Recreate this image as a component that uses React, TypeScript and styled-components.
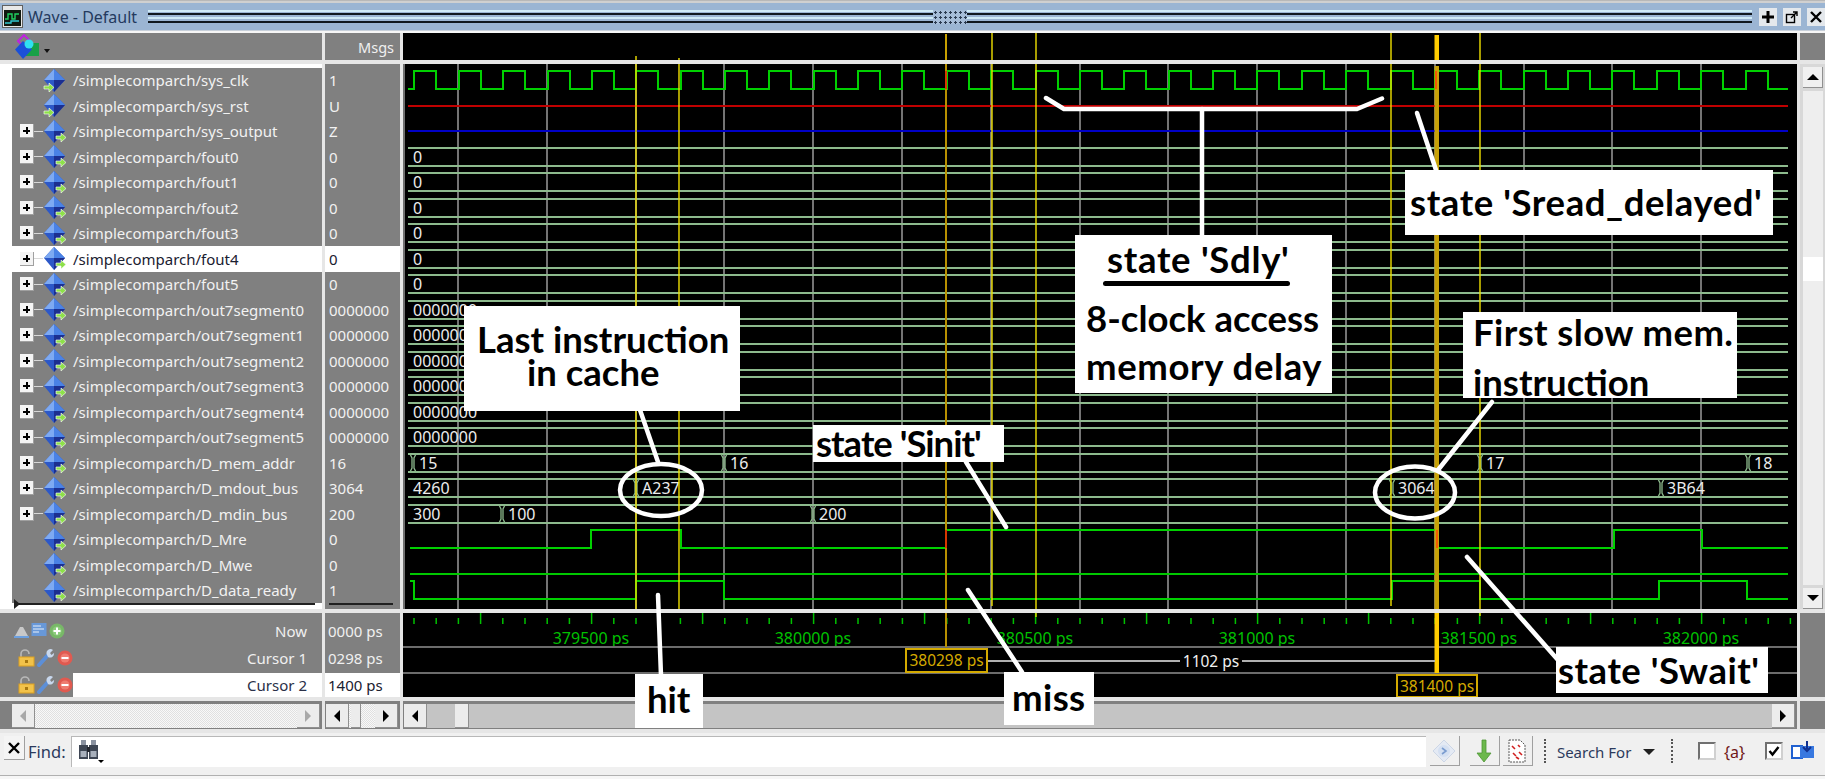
import styled, { createGlobalStyle } from "styled-components";

const GlobalStyle = createGlobalStyle`
  html, body { margin: 0; padding: 0; background: #f0f0f0; }
  body { font-family: "Noto Sans", "Liberation Sans", sans-serif; overflow: hidden; }
`;

const ROW_H = 25.5;
const rowTop = (i: number) => Math.round(71 + ROW_H * i);
const rowLow = (i: number) => rowTop(i) + 18;
const rowMid = (i: number) => rowTop(i) + 9;
const WAVE_L = 408;
const WAVE_R = 1790;
const GRID = Array.from({ length: 15 }, (_, n) => Math.round(458 + 88.8 * n));
const THIN_CURSORS: [number, number, number][] = [
  [636, 56, 609],
  [679, 58, 609],
  [992, 32, 606],
  [1036, 32, 617],
  [1391, 29, 606],
  [1480, 32, 616],
];

type Signal = { name: string; msg: string; input?: boolean; bus?: boolean };

const signals: Signal[] = [
  { name: "sys_clk", msg: "1", input: true },
  { name: "sys_rst", msg: "U", input: true },
  { name: "sys_output", msg: "Z", bus: true },
  { name: "fout0", msg: "0", bus: true },
  { name: "fout1", msg: "0", bus: true },
  { name: "fout2", msg: "0", bus: true },
  { name: "fout3", msg: "0", bus: true },
  { name: "fout4", msg: "0", bus: true },
  { name: "fout5", msg: "0", bus: true },
  { name: "out7segment0", msg: "0000000", bus: true },
  { name: "out7segment1", msg: "0000000", bus: true },
  { name: "out7segment2", msg: "0000000", bus: true },
  { name: "out7segment3", msg: "0000000", bus: true },
  { name: "out7segment4", msg: "0000000", bus: true },
  { name: "out7segment5", msg: "0000000", bus: true },
  { name: "D_mem_addr", msg: "16", bus: true },
  { name: "D_mdout_bus", msg: "3064", bus: true },
  { name: "D_mdin_bus", msg: "200", bus: true },
  { name: "D_Mre", msg: "0" },
  { name: "D_Mwe", msg: "0" },
  { name: "D_data_ready", msg: "1" },
];

// [row, [x, label] ...]: x of 0 means the value has no transition mark
const busValues: [number, [number, string][]][] = [
  [3, [[0, "0"]]],
  [4, [[0, "0"]]],
  [5, [[0, "0"]]],
  [6, [[0, "0"]]],
  [7, [[0, "0"]]],
  [8, [[0, "0"]]],
  [9, [[0, "0000000"]]],
  [10, [[0, "0000000"]]],
  [11, [[0, "0000000"]]],
  [12, [[0, "0000000"]]],
  [13, [[0, "0000000"]]],
  [14, [[0, "0000000"]]],
  [15, [[413, "15"], [724, "16"], [1480, "17"], [1748, "18"]]],
  [16, [[0, "4260"], [636, "A237"], [1392, "3064"], [1661, "3B64"]]],
  [17, [[0, "300"], [502, "100"], [813, "200"]]],
];

const clockPath = () => {
  let d = `M${WAVE_L} ${rowLow(0)}`;
  for (let k = 0; k <= 30; k++) {
    const rise = Math.round(414.4 + 44.37 * k);
    d += ` H${rise} V${rowTop(0)} H${rise + 22} V${rowLow(0)}`;
  }
  return d + ` H${WAVE_R - 2}`;
};

const stepPath = (row: number, startHigh: boolean, edges: number[]) => {
  let high = startHigh;
  let d = `M${WAVE_L + 2} ${high ? rowTop(row) : rowLow(row)}`;
  for (const x of edges) {
    high = !high;
    d += ` H${x} V${high ? rowTop(row) : rowLow(row)}`;
  }
  return d + ` H${WAVE_R - 2}`;
};

const Page = styled.div`
  position: relative;
  width: 1825px;
  height: 779px;
  display: flex;
  flex-direction: column;
  overflow: hidden;
  background: #f6f6f6;
`;

const TopEdge = styled.div`
  height: 3px;
  background: #d0d0d0;
  border-top: 1px solid #b8b8b8;
  box-sizing: border-box;
`;

const TitleBar = styled.div`
  height: 28px;
  background: #9bb5d3;
  display: flex;
  align-items: center;
  padding-left: 2px;
  border-bottom: 1px solid #c8d0da;
  box-sizing: border-box;
`;

const TitleText = styled.span`
  margin-left: 5px;
  width: 120px;
  font-size: 16px;
  color: #243a5e;
  white-space: nowrap;
`;

const Grip = styled.div`
  flex: 1;
  height: 14px;
  margin-top: 1px;
  background: linear-gradient(
    to bottom,
    #cfeaf6 0 2px,
    #9bb5d3 2px 3px,
    #10181f 3px 5px,
    #9bb5d3 5px 7px,
    #cfeaf6 7px 9px,
    #9bb5d3 9px 11px,
    #10181f 11px 13px,
    #9bb5d3 13px 14px
  );
`;

const GripDots = styled.div`
  width: 34px;
  height: 14px;
  margin-top: 1px;
  background-color: #a6bdd8;
  background-image: radial-gradient(circle, #2a3a50 1px, transparent 1.2px);
  background-size: 5px 5px;
`;

const TitleButtons = styled.div`
  display: flex;
  gap: 6px;
  margin-left: 7px;
`;

const TitleButton = styled.button`
  width: 18px;
  height: 18px;
  padding: 0;
  border: none;
  background: #e4e8ec;
  display: flex;
  align-items: center;
  justify-content: center;
`;

const Panes = styled.div`
  margin-top: 2px;
  display: grid;
  grid-template-columns: 322px 75px 1394px 25px;
  grid-template-rows: 27px 545px 84px 28px;
  column-gap: 3px;
  row-gap: 4px;
  background: #e6e6e6;
  padding-bottom: 4px;
`;

const HeadCell = styled.div<{ $align?: string }>`
  background: #808080;
  display: flex;
  align-items: center;
  justify-content: ${(p) => p.$align || "flex-start"};
  padding: 0 6px 0 14px;
  color: #f0f0f0;
  font-size: 14.5px;
`;

const GrayCell = styled.div`
  background: #808080;
`;

const WaveSvg = styled.svg`
  display: block;
  background: #000;
`;

const NamePane = styled.div`
  position: relative;
  background: #fff;
  padding-top: 3.5px;
`;

const MsgPane = styled.div`
  position: relative;
  background: #808080;
  padding-top: 3.5px;
  overflow: hidden;
`;

const SignalRow = styled.div<{ $selected?: boolean }>`
  height: ${ROW_H}px;
  margin-left: 12px;
  display: flex;
  align-items: center;
  background: ${(p) => (p.$selected ? "#fff" : "#808080")};
  color: ${(p) => (p.$selected ? "#1a2030" : "#f2f2f2")};
  font-size: 15px;
  white-space: nowrap;
`;

const MsgRow = styled(SignalRow)`
  margin-left: 0;
  padding-left: 4px;
`;

const TreeSlot = styled.div`
  width: 31px;
  height: 100%;
  display: flex;
  align-items: center;
  justify-content: flex-end;
`;

const Expander = styled.div`
  position: relative;
  width: 14px;
  height: 14px;
  box-sizing: border-box;
  background: #f4f4f4;
  border-right: 1px solid #a0a0a0;
  border-bottom: 1px solid #a0a0a0;
  margin-right: 9px;

  &::before {
    content: "";
    position: absolute;
    left: 3px;
    top: 6px;
    width: 7px;
    height: 2px;
    background: #000;
  }
  &::after {
    content: "";
    position: absolute;
    left: 6px;
    top: 3px;
    width: 2px;
    height: 7px;
    background: #000;
  }
`;

const TreeTick = styled.div`
  position: absolute;
  left: 34px;
  width: 9px;
  height: 1px;
  background: #d8d8d8;
`;

const SignalName = styled.span`
  margin-left: 6px;
`;

const EndMark = styled.div<{ $left: number; $right: number }>`
  position: absolute;
  left: ${(p) => p.$left}px;
  right: ${(p) => p.$right}px;
  bottom: 4px;
  height: 2px;
  background: #202020;
`;

const EndArrow = styled.div`
  position: absolute;
  left: 14px;
  bottom: 0;
  width: 0;
  height: 0;
  border-top: 5px solid transparent;
  border-bottom: 5px solid transparent;
  border-left: 6px solid #202020;
`;

const CursorNames = styled.div`
  background: #808080;
  display: flex;
  flex-direction: column;
  padding-top: 5px;
`;

const CursorRow = styled.div<{ $selected?: boolean; $h: number }>`
  height: ${(p) => p.$h}px;
  display: flex;
  align-items: center;
  color: ${(p) => (p.$selected ? "#2a3048" : "#f0f0f0")};
  font-size: 15px;
  padding-right: 15px;
`;

const CursorIcons = styled.div<{ $left: number }>`
  display: flex;
  align-items: center;
  gap: 2px;
  width: ${(p) => 73 - p.$left}px;
  margin-left: ${(p) => p.$left}px;
  flex: none;
`;

const CursorLabel = styled.div<{ $selected?: boolean }>`
  flex: 1;
  align-self: stretch;
  display: flex;
  align-items: center;
  justify-content: flex-end;
  margin-right: -15px;
  padding-right: 15px;
  background: ${(p) => (p.$selected ? "#fff" : "transparent")};
`;

const CursorValues = styled.div`
  background: #808080;
  padding-top: 5px;
  display: flex;
  flex-direction: column;
`;

const CursorValue = styled.div<{ $selected?: boolean; $h: number }>`
  height: ${(p) => p.$h}px;
  display: flex;
  align-items: center;
  padding-left: 3px;
  font-size: 15px;
  white-space: nowrap;
  background: ${(p) => (p.$selected ? "#fff" : "transparent")};
  color: ${(p) => (p.$selected ? "#1a2030" : "#f0f0f0")};
`;

const ScrollCell = styled.div<{ $pad?: number }>`
  background: #808080;
  display: flex;
  align-items: stretch;
  padding: 3px 2px 1px ${(p) => p.$pad ?? 1}px;
`;

const ScrollButton = styled.button<{ $disabled?: boolean }>`
  width: 23px;
  padding: 0;
  flex: none;
  border: none;
  border-right: 1px solid #909090;
  border-bottom: 1px solid #909090;
  background: #ececec;
  display: flex;
  align-items: center;
  justify-content: center;
  color: ${(p) => (p.$disabled ? "#a8a8a8" : "#000")};
`;

const Track = styled.div<{ $hatched?: boolean }>`
  flex: 1;
  background: ${(p) => (p.$hatched ? "#f0f0f0" : "#c4c4c4")};
  background-image: ${(p) =>
    p.$hatched
      ? "repeating-conic-gradient(#e0e0e0 0% 25%, #f8f8f8 0% 50%)"
      : "none"};
  background-size: 2px 2px;
  display: flex;
`;

const Thumb = styled.div<{ $w: number; $ml: number }>`
  width: ${(p) => p.$w}px;
  margin-left: ${(p) => p.$ml}px;
  background: #ececec;
  border-right: 1px solid #909090;
  border-bottom: 1px solid #909090;
  box-sizing: border-box;
`;

const ArrowLeft = styled.i<{ $right?: boolean }>`
  width: 0;
  height: 0;
  border-top: 6px solid transparent;
  border-bottom: 6px solid transparent;
  ${(p) =>
    p.$right
      ? "border-left: 6px solid currentColor;"
      : "border-right: 6px solid currentColor;"}
`;

const VScroll = styled.div`
  background: #d8d8d8;
  padding: 3px 2px 0 3px;
  display: flex;
  flex-direction: column;
`;

const VButton = styled.button`
  height: 21px;
  padding: 0;
  flex: none;
  border: none;
  border-right: 1px solid #909090;
  border-bottom: 1px solid #909090;
  background: #f0f0f0;
  display: flex;
  align-items: center;
  justify-content: center;
`;

const VArrow = styled.i<{ $down?: boolean }>`
  width: 0;
  height: 0;
  border-left: 6px solid transparent;
  border-right: 6px solid transparent;
  ${(p) =>
    p.$down ? "border-top: 6px solid #000;" : "border-bottom: 6px solid #000;"}
`;

const VTrack = styled.div`
  flex: 1;
  margin: 3px 0;
  background: #eeeeee;
  display: flex;
  flex-direction: column;
  padding-top: 166px;
`;

const VThumb = styled.div`
  height: 24px;
  background: #fff;
`;

const FindBar = styled.div`
  height: 43px;
  background: #f0f0f0;
  display: flex;
  align-items: flex-start;
  padding: 3px 8px 0 4px;
  box-sizing: border-box;
  border-bottom: 1px solid #b0b0b0;
  font-size: 15px;
  color: #2c3a5c;
`;

const CloseButton = styled.button`
  width: 21px;
  height: 24px;
  padding: 0;
  border: none;
  border-right: 1px solid #a0a0a0;
  border-bottom: 1px solid #a0a0a0;
  background: #f4f4f4;
  display: flex;
  align-items: center;
  justify-content: center;
`;

const FindLabel = styled.span`
  margin-left: 3px;
  width: 43px;
  font-size: 16.5px;
  line-height: 32px;
`;

const FindInput = styled.div`
  width: 1355px;
  height: 31px;
  box-sizing: border-box;
  background: #fff;
  border-top: 1px solid #b8b8b8;
  border-left: 1px solid #b8b8b8;
  padding: 3px 0 0 6px;
  display: flex;
`;

const ToolButton = styled.button<{ $w: number; $ml: number }>`
  width: ${(p) => p.$w}px;
  height: 30px;
  margin-left: ${(p) => p.$ml}px;
  padding: 0;
  border: none;
  border-right: 1px solid #a0a0a0;
  border-bottom: 1px solid #a0a0a0;
  background: #f0f0f0;
  display: flex;
  align-items: center;
  justify-content: center;
`;

const DotSep = styled.div<{ $ml: number }>`
  width: 0;
  height: 24px;
  margin: 3px 0 0 ${(p) => p.$ml}px;
  border-left: 2px dotted #555;
`;

const SearchFor = styled.span`
  margin-left: 11px;
  width: 86px;
  line-height: 32px;
  white-space: nowrap;
`;

const DropTriangle = styled.i`
  width: 0;
  height: 0;
  margin: 13px 16px 0 0;
  border-left: 6px solid transparent;
  border-right: 6px solid transparent;
  border-top: 6px solid #202020;
`;

const CheckBox = styled.div<{ $ml: number }>`
  width: 18px;
  height: 18px;
  margin: 6px 0 0 ${(p) => p.$ml}px;
  box-sizing: border-box;
  background: #fff;
  border: 2px solid #707070;
  border-right-color: #d0d0d0;
  border-bottom-color: #d0d0d0;
  display: flex;
  align-items: center;
  justify-content: center;
`;

const BraceA = styled.span`
  margin-left: 8px;
  line-height: 32px;
  font-size: 16px;
  color: #701818;
  white-space: nowrap;
`;

const Overlay = styled.svg`
  position: absolute;
  left: 0;
  top: 0;
  pointer-events: none;
`;

const Callout = styled.div<{ $x: number; $y: number; $w: number; $h: number }>`
  position: absolute;
  left: ${(p) => p.$x}px;
  top: ${(p) => p.$y}px;
  width: ${(p) => p.$w}px;
  height: ${(p) => p.$h}px;
  background: #fff;
  color: #000;
  font-family: "Lato", "Open Sans", sans-serif;
  font-weight: 700;
  font-size: 36.5px;
`;

const CalloutLine = styled.div<{ $lh: number; $indent: number; $mt?: number; $ls?: number }>`
  line-height: ${(p) => p.$lh}px;
  padding-left: ${(p) => p.$indent}px;
  margin-top: ${(p) => p.$mt ?? 0}px;
  letter-spacing: ${(p) => p.$ls ?? 0}px;
  white-space: nowrap;
`;

const CalloutRule = styled.div`
  width: 187px;
  height: 5px;
  margin: -2px 0 0 28px;
  border-radius: 3px;
  background: #000;
`;

const SignalIcon = ({ input }: { input?: boolean }) => (
  <svg width="24" height="25" viewBox="0 0 24 25">
    <polygon points="11,1 22,12 11,24 1,12" fill="#2c58c8" />
    <polygon points="11,1 1,12 11,12" fill="#7eaaf2" />
    <polygon points="11,1 22,12 11,12" fill="#4a82e6" />
    <polygon points="11,24 22,12 11,12" fill="#1c2f90" />
    {input ? (
      <polygon
        points="1,18 6,18 6,15 11,19.5 6,24 6,21 1,21"
        fill="#8ee04a"
        stroke="#fff"
        strokeWidth="0.6"
      />
    ) : (
      <polygon
        points="13,17 18,17 18,14 23,18.5 18,23 18,20 13,20"
        fill="#8ee04a"
        stroke="#fff"
        strokeWidth="0.6"
      />
    )}
  </svg>
);

const LockIcon = () => (
  <svg width="17" height="18" viewBox="0 0 17 18">
    <path d="M3 8V5a4 4 0 0 1 8 0" fill="none" stroke="#b8b8b8" strokeWidth="1.6" />
    <rect x="1" y="8" width="15" height="9" fill="#f2c24a" stroke="#dba020" />
    <rect x="7" y="11" width="3" height="3" fill="#a87810" />
  </svg>
);

const WrenchIcon = () => (
  <svg width="18" height="18" viewBox="0 0 18 18">
    <path d="M2 16 L11 6" stroke="#5c8fd8" strokeWidth="4" strokeLinecap="round" />
    <path d="M10 6 A4 4 0 0 1 16 1 L13 4 L14.5 6 L17 4 A4 4 0 0 1 11 8Z" fill="#c8d8ee" />
  </svg>
);

const CircleIcon = ({ plus }: { plus?: boolean }) => (
  <svg width="16" height="16" viewBox="0 0 16 16">
    <circle cx="8" cy="8" r="7.5" fill={plus ? "#78b868" : "#e05a50"} />
    <circle cx="8" cy="8" r="4.6" fill={plus ? "#8ccc7c" : "#ee7c70"} />
    <rect x="4.5" y="7" width="7" height="2" fill="#fff" />
    {plus && <rect x="7" y="4.5" width="2" height="7" fill="#fff" />}
  </svg>
);

const WaveCanvas = () => (
  <WaveSvg width="1394" height="545" viewBox="403 64 1394 545">
    {GRID.map((x) => (
      <line key={x} x1={x} x2={x} y1={64} y2={609} stroke="#747474" strokeWidth="2" />
    ))}
    <line x1={404} x2={404} y1={64} y2={609} stroke="#707070" strokeWidth="2" />
    <path d={clockPath()} fill="none" stroke="#00d000" strokeWidth="2" />
    <line x1={WAVE_L} x2={WAVE_R - 2} y1={rowMid(1)} y2={rowMid(1)} stroke="#c00000" strokeWidth="2" />
    <line x1={WAVE_L} x2={WAVE_R - 2} y1={rowMid(2)} y2={rowMid(2)} stroke="#0000c8" strokeWidth="2" />
    {busValues.map(([row, values]) => {
      const top = rowTop(row);
      const low = rowLow(row);
      return (
        <g key={row}>
          <line x1={WAVE_L} x2={WAVE_R - 2} y1={top} y2={top} stroke="#8dba8d" strokeWidth="2" />
          <line x1={WAVE_L} x2={WAVE_R - 2} y1={low} y2={low} stroke="#8dba8d" strokeWidth="2" />
          {values.map(([x, label]) => (
            <g key={label}>
              {x > 0 && (
                <path
                  d={`M${x - 3} ${top} L${x - 1} ${top + 4} V${low - 4} L${x - 3} ${low} M${x + 3} ${top} L${x + 1} ${top + 4} V${low - 4} L${x + 3} ${low}`}
                  fill="none"
                  stroke="#8dba8d"
                  strokeWidth="1.3"
                />
              )}
              <text
                x={x > 0 ? x + 6 : 413}
                y={rowMid(row) + 6}
                fill="#ececec"
                fontSize="16"
                fontFamily="Noto Sans, sans-serif"
              >
                {label}
              </text>
            </g>
          ))}
        </g>
      );
    })}
    <path d={stepPath(18, false, [591, 681, 946, 1437, 1614, 1702])} fill="none" stroke="#00d000" strokeWidth="2" />
    <line x1={WAVE_L + 2} x2={WAVE_R - 2} y1={rowLow(19)} y2={rowLow(19)} stroke="#00c800" strokeWidth="2" />
    <path d={stepPath(20, true, [414, 636, 724, 1392, 1480, 1659, 1747])} fill="none" stroke="#00d000" strokeWidth="2" />
    {THIN_CURSORS.map(([x, , end]) => (
      <line key={x} x1={x} x2={x} y1={64} y2={end} stroke="#f0e000" strokeWidth="1.4" />
    ))}
    <rect x={945} y={64} width={2} height={545} fill="#b89000" />
    <rect x={1434.5} y={66} width={4.5} height={543} fill="#c8a208" />
    <line x1={946} x2={946} y1={rowTop(0)} y2={rowLow(0)} stroke="#e02000" strokeWidth="1.6" />
    <line x1={946} x2={946} y1={rowTop(18)} y2={rowLow(18)} stroke="#e02000" strokeWidth="1.6" />
    <line x1={1436} x2={1436} y1={rowTop(0)} y2={rowLow(0)} stroke="#ff4800" strokeWidth="1.6" />
    <line x1={1437} x2={1437} y1={rowTop(18)} y2={rowLow(18)} stroke="#ff4800" strokeWidth="1.6" />
  </WaveSvg>
);

const Ruler = () => {
  const ticks = Array.from({ length: 63 }, (_, k) => 414 + 22.2 * k).filter((x) => x < 1792);
  const labels: [number, string][] = [
    [591, "379500 ps"],
    [813, "380000 ps"],
    [1035, "380500 ps"],
    [1257, "381000 ps"],
    [1479, "381500 ps"],
    [1701, "382000 ps"],
  ];
  return (
    <WaveSvg width="1394" height="84" viewBox="403 613 1394 84">
      {ticks.map((x, k) => (
        <line
          key={x}
          x1={x}
          x2={x}
          y1={(k + 2) % 5 === 0 ? 613 : 618}
          y2={624}
          stroke="#00c000"
          strokeWidth="1.5"
        />
      ))}
      {labels.map(([x, label]) => (
        <text key={label} x={x} y={644} fill="#00c000" fontSize="16" textAnchor="middle" fontFamily="Noto Sans, sans-serif">
          {label}
        </text>
      ))}
      <line x1={403} x2={1797} y1={647} y2={647} stroke="#6c6c6c" strokeWidth="2" />
      <line x1={403} x2={1797} y1={673} y2={673} stroke="#6c6c6c" strokeWidth="2" />
      <line x1={1036} x2={1036} y1={613} y2={617} stroke="#f0e000" strokeWidth="1.4" />
      <line x1={1480} x2={1480} y1={613} y2={616} stroke="#f0e000" strokeWidth="1.4" />
      <rect x={945} y={613} width={2} height={34} fill="#b89000" />
      <rect x={1434.5} y={613} width={4.5} height={60} fill="#ffcc00" />
      <line x1={987} x2={1435} y1={661} y2={661} stroke="#b0b0b0" strokeWidth="2" />
      <rect x={1180} y={650} width={62} height={20} fill="#000" />
      <text x={1211} y={667} fill="#f0f0f0" fontSize="15.5" textAnchor="middle" fontFamily="Noto Sans, sans-serif">
        1102 ps
      </text>
      <rect x={906} y={649} width={81} height={23} fill="#000" stroke="#d4aa00" strokeWidth="2" />
      <text x={946.5} y={666} fill="#d4aa00" fontSize="15.5" textAnchor="middle" fontFamily="Noto Sans, sans-serif">
        380298 ps
      </text>
      <rect x={1397} y={675} width={80} height={22} fill="#000" stroke="#d4aa00" strokeWidth="2" />
      <text x={1437} y={692} fill="#d4aa00" fontSize="15.5" textAnchor="middle" fontFamily="Noto Sans, sans-serif">
        381400 ps
      </text>
    </WaveSvg>
  );
};

const Arrows = () => (
  <Overlay width="1825" height="779" viewBox="0 0 1825 779">
    <g fill="none" stroke="#fff" strokeWidth="4.5" strokeLinecap="round" strokeLinejoin="round">
      <path d="M1046 98 L1064 109 H1357 L1382 98.5" />
      <path d="M1202 109 V236" />
      <path d="M1417 113 L1436 170" />
      <path d="M640 410 L658 462" />
      <ellipse cx="661" cy="490" rx="41" ry="26" />
      <path d="M966 462 L1006 527" />
      <path d="M968 590 L1022 672" />
      <path d="M658 595 L661 676" />
      <ellipse cx="1415" cy="492.5" rx="40" ry="26" />
      <path d="M1492 402 L1438 470" />
      <path d="M1467 557 L1558 660" />
    </g>
  </Overlay>
);

export default function App() {
  return (
    <Page>
      <GlobalStyle />
      <TopEdge />
      <TitleBar>
        <svg width="21" height="23" viewBox="0 0 21 23">
          <rect x="0.5" y="0.5" width="20" height="22" fill="#e8e8e8" stroke="#606060" />
          <rect x="2" y="5" width="17" height="16" fill="#101810" />
          <path d="M3 14h3v-5h4v5h3v-5h4" fill="none" stroke="#20d060" strokeWidth="1.4" />
          <path d="M3 18h6v-2h8" fill="none" stroke="#30c8d0" strokeWidth="1.4" />
        </svg>
        <TitleText>Wave - Default</TitleText>
        <Grip />
        <GripDots />
        <Grip />
        <TitleButtons>
          <TitleButton>
            <svg width="14" height="14" viewBox="0 0 14 14">
              <path d="M7 1v12M1 7h12" stroke="#000" strokeWidth="3" />
            </svg>
          </TitleButton>
          <TitleButton>
            <svg width="14" height="14" viewBox="0 0 14 14">
              <rect x="1.5" y="4.5" width="8" height="8" fill="none" stroke="#000" strokeWidth="1.4" />
              <path d="M6 8l6-6M8 2h4v4" fill="none" stroke="#000" strokeWidth="1.4" />
            </svg>
          </TitleButton>
          <TitleButton>
            <svg width="14" height="14" viewBox="0 0 14 14">
              <path d="M2 2l10 10M12 2L2 12" stroke="#000" strokeWidth="2.4" />
            </svg>
          </TitleButton>
        </TitleButtons>
      </TitleBar>

      <Panes>
        <HeadCell>
          <svg width="36" height="25" viewBox="0 0 36 25">
            <polygon points="10,1 16,7 10,13 4,7" fill="none" stroke="#c020e0" strokeWidth="2" />
            <rect x="12" y="9" width="13" height="13" fill="#18a048" />
            <polygon points="9,7 18,15.5 9,25 1,15.5" fill="#1a50d8" />
            <circle cx="15" cy="10" r="4.5" fill="#30e0f0" />
            <polygon points="30,15 36,15 33,19" fill="#101010" />
          </svg>
        </HeadCell>
        <HeadCell $align="flex-end">Msgs</HeadCell>
        <WaveSvg width="1394" height="27" viewBox="403 33 1394 27">
          {THIN_CURSORS.map(([x, start]) => (
            <line key={x} x1={x} x2={x} y1={start} y2={60} stroke="#f0e000" strokeWidth="1.4" />
          ))}
          <rect x={945} y={34} width={2} height={26} fill="#c8a000" />
          <rect x={1434.5} y={35} width={4.5} height={25} fill="#ffcc00" />
        </WaveSvg>
        <GrayCell />

        <NamePane>
          {signals.map((s, i) => (
            <SignalRow key={s.name} $selected={i === 7}>
              <TreeSlot>
                {s.bus && (
                  <>
                    <Expander />
                    <TreeTick />
                  </>
                )}
              </TreeSlot>
              <SignalIcon input={s.input} />
              <SignalName>/simplecomparch/{s.name}</SignalName>
            </SignalRow>
          ))}
          <EndMark $left={15} $right={7} />
          <EndArrow />
        </NamePane>
        <MsgPane>
          {signals.map((s, i) => (
            <MsgRow key={s.name} $selected={i === 7}>
              {s.msg}
            </MsgRow>
          ))}
          <EndMark $left={4} $right={7} />
        </MsgPane>
        <WaveCanvas />
        <VScroll>
          <VButton>
            <VArrow />
          </VButton>
          <VTrack>
            <VThumb />
          </VTrack>
          <VButton>
            <VArrow $down />
          </VButton>
        </VScroll>

        <CursorNames>
          <CursorRow $h={26}>
            <CursorIcons $left={14}>
              <svg width="15" height="16" viewBox="0 0 15 16">
                <path d="M1 13l5-9h3l5 9z" fill="#c8c8c8" />
                <path d="M0 14h15" stroke="#6ca0e0" strokeWidth="2" />
              </svg>
              <svg width="16" height="17" viewBox="0 0 16 17">
                <rect x="0.5" y="1" width="15" height="13" fill="#6898d8" />
                <path d="M2 4h8M2 7h11M2 10h6" stroke="#e8f0fa" strokeWidth="1.2" />
              </svg>
              <CircleIcon plus />
            </CursorIcons>
            <CursorLabel>Now</CursorLabel>
          </CursorRow>
          <CursorRow $h={30}>
            <CursorIcons $left={18}>
              <LockIcon />
              <WrenchIcon />
              <CircleIcon />
            </CursorIcons>
            <CursorLabel>Cursor 1</CursorLabel>
          </CursorRow>
          <CursorRow $h={24} $selected>
            <CursorIcons $left={18}>
              <LockIcon />
              <WrenchIcon />
              <CircleIcon />
            </CursorIcons>
            <CursorLabel $selected>Cursor 2</CursorLabel>
          </CursorRow>
        </CursorNames>
        <CursorValues>
          <CursorValue $h={26}>0000 ps</CursorValue>
          <CursorValue $h={30}>0298 ps</CursorValue>
          <CursorValue $h={24} $selected>
            1400 ps
          </CursorValue>
        </CursorValues>
        <Ruler />
        <GrayCell />

        <ScrollCell $pad={12}>
          <ScrollButton $disabled>
            <ArrowLeft />
          </ScrollButton>
          <Track $hatched />
          <ScrollButton $disabled>
            <ArrowLeft $right />
          </ScrollButton>
        </ScrollCell>
        <ScrollCell>
          <ScrollButton>
            <ArrowLeft />
          </ScrollButton>
          <Track $hatched>
            <Thumb $w={10} $ml={2} />
          </Track>
          <ScrollButton>
            <ArrowLeft $right />
          </ScrollButton>
        </ScrollCell>
        <ScrollCell>
          <ScrollButton>
            <ArrowLeft />
          </ScrollButton>
          <Track>
            <Thumb $w={14} $ml={28} />
          </Track>
          <ScrollButton>
            <ArrowLeft $right />
          </ScrollButton>
        </ScrollCell>
        <GrayCell />
      </Panes>

      <FindBar>
        <CloseButton>
          <svg width="14" height="14" viewBox="0 0 14 14">
            <path d="M2 2l10 10M12 2L2 12" stroke="#000" strokeWidth="2.4" />
          </svg>
        </CloseButton>
        <FindLabel>Find:</FindLabel>
        <FindInput>
          <svg width="28" height="24" viewBox="0 0 28 24">
            <rect x="3" y="0" width="5" height="5" fill="#8a92a0" />
            <rect x="13" y="0" width="5" height="5" fill="#8a92a0" />
            <rect x="1" y="5" width="9" height="14" fill="#3e4654" />
            <rect x="11" y="5" width="9" height="14" fill="#3e4654" />
            <rect x="9" y="7" width="3" height="5" fill="#22262e" />
            <rect x="2.5" y="11" width="6" height="6" fill="#a8b0bc" />
            <rect x="12.5" y="11" width="6" height="6" fill="#a8b0bc" />
            <polygon points="20,20 26,20 23,23" fill="#000" />
          </svg>
        </FindInput>
        <ToolButton $w={30} $ml={4}>
          <svg width="24" height="24" viewBox="0 0 24 24">
            <polygon points="12,1 23,12 12,23 1,12" fill="#e4eaf4" stroke="#ccd6e6" />
            <circle cx="12" cy="12" r="6" fill="#d4e0f2" />
            <path d="M10 9l4 3-4 3" fill="none" stroke="#7a9cd0" strokeWidth="1.6" />
          </svg>
        </ToolButton>
        <ToolButton $w={30} $ml={10}>
          <svg width="16" height="24" viewBox="0 0 16 24">
            <path d="M6 1h4v13h5l-7 9-7-9h5z" fill="#6cb84c" stroke="#4c9434" strokeWidth="0.8" />
          </svg>
        </ToolButton>
        <ToolButton $w={30} $ml={3}>
          <svg width="20" height="24" viewBox="0 0 20 24">
            <path d="M2 1h11l5 5v17H2z" fill="#fff" stroke="#555" strokeDasharray="2 1" />
            <path d="M5 7l3 3M11 6l2 2M6 14l3 3M12 13l3 3M9 18l3 2" stroke="#d02020" strokeWidth="1.6" />
          </svg>
        </ToolButton>
        <DotSep $ml={11} />
        <SearchFor>Search For</SearchFor>
        <DropTriangle />
        <DotSep $ml={0} />
        <CheckBox $ml={25} />
        <BraceA>{"{a}"}</BraceA>
        <CheckBox $ml={20}>
          <svg width="12" height="12" viewBox="0 0 12 12">
            <path d="M1.5 6l3 3.5L10.5 2" fill="none" stroke="#000" strokeWidth="2.4" />
          </svg>
        </CheckBox>
        <svg width="26" height="22" viewBox="0 0 26 22" style={{ marginLeft: 8, marginTop: 4 }}>
          <rect x="1" y="6" width="10" height="12" fill="#fff" stroke="#2060d0" strokeWidth="2" />
          <rect x="9" y="6" width="14" height="12" fill="#3878e0" />
          <path d="M16 1v8M12 7l4 4 4-4" fill="none" stroke="#103090" strokeWidth="2" />
        </svg>
      </FindBar>

      <Arrows />

      <Callout $x={464} $y={306} $w={276} $h={105}>
        <CalloutLine $lh={33} $indent={13} $mt={17}>Last instruction</CalloutLine>
        <CalloutLine $lh={33} $indent={63}>in cache</CalloutLine>
      </Callout>
      <Callout $x={813} $y={425} $w={191} $h={37}>
        <CalloutLine $lh={37} $indent={3} $ls={-1}>state 'Sinit'</CalloutLine>
      </Callout>
      <Callout $x={1075} $y={235} $w={257} $h={158}>
        <CalloutLine $lh={48} $indent={32} $ls={0.7}>state 'Sdly'</CalloutLine>
        <CalloutRule />
        <CalloutLine $lh={48} $indent={11} $mt={8}>8-clock access</CalloutLine>
        <CalloutLine $lh={48} $indent={11} $ls={0.6}>memory delay</CalloutLine>
      </Callout>
      <Callout $x={1405} $y={170} $w={368} $h={65}>
        <CalloutLine $lh={65} $indent={5} $ls={0.6}>state 'Sread_delayed'</CalloutLine>
      </Callout>
      <Callout $x={1463} $y={312} $w={274} $h={86}>
        <CalloutLine $lh={40} $indent={10} $ls={0.4}>First slow mem.</CalloutLine>
        <CalloutLine $lh={60} $indent={10}>instruction</CalloutLine>
      </Callout>
      <Callout $x={1556} $y={647} $w={212} $h={46}>
        <CalloutLine $lh={46} $indent={2} $ls={0.5}>state 'Swait'</CalloutLine>
      </Callout>
      <Callout $x={635} $y={674} $w={68} $h={54}>
        <CalloutLine $lh={50} $indent={12}>hit</CalloutLine>
      </Callout>
      <Callout $x={1004} $y={672} $w={90} $h={53}>
        <CalloutLine $lh={50} $indent={8} $ls={0.4}>miss</CalloutLine>
      </Callout>
    </Page>
  );
}
